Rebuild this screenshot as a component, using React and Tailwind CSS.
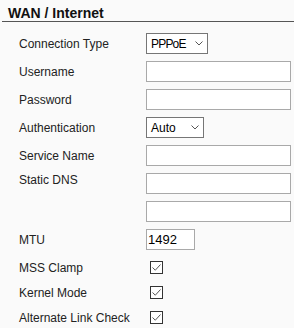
const font = { fontFamily: '"Liberation Sans", Arial, sans-serif' };

function Chevron() {
  return (
    <svg width="8" height="5" viewBox="0 0 8 5" className="shrink-0">
      <path d="M0.5 0.5 L4 4 L7.5 0.5" fill="none" stroke="#555" strokeWidth="1" />
    </svg>
  );
}

function Select({ value, width, tight }) {
  return (
    <div
      className="h-[21px] border border-[#767676] bg-white flex items-center justify-between pl-[4px] pr-[4px] text-[12px] text-[#000]"
      style={{ width }}
    >
      <span className={tight ? 'tracking-[-0.8px]' : ''}>{value}</span>
      <Chevron />
    </div>
  );
}

function Input({ value = '', width = 145 }) {
  return (
    <div
      className="h-[21px] border border-[#a9a9a9] bg-white flex items-center pl-[1px] text-[13px] text-[#000]"
      style={{ width }}
    >
      {value}
    </div>
  );
}

function Check() {
  return (
    <div className="ml-[4px] w-[13px] h-[13px] border border-[#333] bg-white flex items-center justify-center">
      <svg width="11" height="11" viewBox="0 0 11 11">
        <path d="M1.5 5.5 L4.3 8.2 L9.5 2.5" fill="none" stroke="#555" strokeWidth="1" />
      </svg>
    </div>
  );
}

function Row({ label, children, top = false }) {
  return (
    <div className={`flex ${top ? 'items-start' : 'items-center'}`}>
      <div className="w-[127px] shrink-0 text-[12px] leading-[14px] text-[#222]">{label}</div>
      {children}
    </div>
  );
}

function CheckRow({ label }) {
  return (
    <div className="flex items-center h-[25px]">
      <div className="w-[127px] shrink-0 text-[12px] leading-[14px] text-[#222]">{label}</div>
      <Check />
    </div>
  );
}

export default function App() {
  return (
    <div className="w-[294px] h-[328px] bg-[#fafafa] overflow-hidden" style={font}>
      <div className="ml-[2px] h-[22px] border-b border-[#555] pl-[6px] pt-[1px]">
        <span className="text-[14px] leading-[16px] font-bold text-[#111]">WAN / Internet</span>
      </div>

      <div className="pl-[19px] pt-[11px] flex flex-col gap-[7px]">
        <Row label="Connection Type">
          <Select value="PPPoE" width={62} tight />
        </Row>
        <Row label="Username">
          <Input />
        </Row>
        <Row label="Password">
          <Input />
        </Row>
        <Row label="Authentication">
          <Select value="Auto" width={58} />
        </Row>
        <Row label="Service Name">
          <Input />
        </Row>
        <Row label="Static DNS" top>
          <div className="flex flex-col gap-[7px]">
            <Input />
            <Input />
          </div>
        </Row>
        <Row label="MTU">
          <Input value="1492" width={49} />
        </Row>
      </div>

      <div className="pl-[19px] pt-[5px] flex flex-col">
        <CheckRow label="MSS Clamp" />
        <CheckRow label="Kernel Mode" />
        <CheckRow label="Alternate Link Check" />
      </div>
    </div>
  );
}
